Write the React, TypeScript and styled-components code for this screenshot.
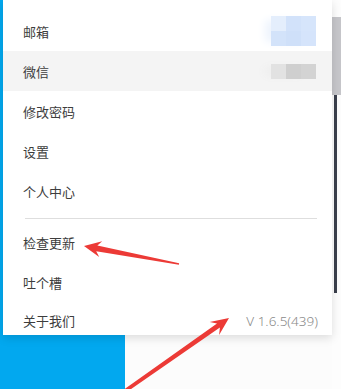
import styled, { createGlobalStyle } from "styled-components";

const GlobalStyle = createGlobalStyle`
  html, body {
    margin: 0;
    padding: 0;
    background: #fcfcfc;
  }
  * { box-sizing: border-box; }
`;

const Screen = styled.div`
  position: relative;
  width: 341px;
  height: 389px;
  overflow: hidden;
  font-family: "Noto Sans CJK SC", "Noto Sans", sans-serif;
`;

// what lies behind the dropdown
const Backdrop = styled.div`
  display: flex;
  height: 100%;
`;

const BlueSide = styled.div`
  width: 125px;
  background: #02a8ef;
`;

const MainArea = styled.div`
  flex: 1;
  background: #fcfcfc;
`;

const Rail = styled.div`
  width: 9px;
  display: flex;
  flex-direction: column;
  padding-top: 17px;
  background: #fdfdfd;
`;

const RailBlock = styled.div`
  height: 78px;
  background: #c6c6ca;
`;

const RailThumb = styled.div`
  width: 3px;
  height: 198px;
  margin-left: 2px;
  background: #3b404d;
`;

const Menu = styled.div`
  position: absolute;
  top: 0;
  left: 3px;
  width: 329px;
  height: 335px;
  background: #fff;
  padding-top: 11px;
  box-shadow: 0 3px 9px rgba(0, 0, 0, 0.13);
  display: flex;
  flex-direction: column;
`;

const Item = styled.div<{ $active?: boolean; $short?: boolean }>`
  display: flex;
  align-items: center;
  justify-content: space-between;
  height: ${(p) => (p.$short ? "33px" : "40px")};
  padding: ${(p) => (p.$short ? "4px 14px 0 20px" : "0 16px 0 20px")};
  background: ${(p) => (p.$active ? "#f4f4f4" : "transparent")};
  font-size: 13px;
  color: #3d3d3d;
`;

const Version = styled.span`
  font-family: "Noto Sans", "Liberation Sans", sans-serif;
  font-size: 13.5px;
  font-weight: 300;
  color: #8a8a8a;
`;

const Divider = styled.div`
  height: 1px;
  margin: 7px 15px 3px 22px;
  background: #dedede;
`;

const Mosaic = styled.div<{ $rows: number; $fringe: string }>`
  display: grid;
  grid-template-columns: repeat(3, 15px);
  grid-template-rows: repeat(${(p) => p.$rows}, 15px);
  box-shadow: -10px 0 8px -4px ${(p) => p.$fringe};
`;

const Cell = styled.div<{ $c: string }>`
  background: ${(p) => p.$c};
`;

const blueCells = ["#e4eefc", "#d2e2fa", "#d6e5fb", "#d3e3fa", "#cfe0f9", "#d5e4fb"];
const grayCells = ["#e2e2e2", "#cfcfcf", "#d3d3d3"];

const Arrows = styled.svg`
  position: absolute;
  inset: 0;
  pointer-events: none;
`;

export default function App() {
  return (
    <>
      <GlobalStyle />
      <Screen>
        <Backdrop>
          <BlueSide />
          <MainArea />
          <Rail>
            <RailBlock />
            <RailThumb />
          </Rail>
        </Backdrop>

        <Menu>
          <Item>
            <span>邮箱</span>
            <Mosaic $rows={2} $fringe="#eef4fd">
              {blueCells.map((c, i) => (
                <Cell key={i} $c={c} />
              ))}
            </Mosaic>
          </Item>
          <Item $active>
            <span>微信</span>
            <Mosaic $rows={1} $fringe="#ececec">
              {grayCells.map((c, i) => (
                <Cell key={i} $c={c} />
              ))}
            </Mosaic>
          </Item>
          <Item>修改密码</Item>
          <Item>设置</Item>
          <Item>个人中心</Item>
          <Divider />
          <Item>检查更新</Item>
          <Item>吐个槽</Item>
          <Item $short>
            <span>关于我们</span>
            <Version>V 1.6.5(439)</Version>
          </Item>
        </Menu>

        <Arrows width="341" height="389" viewBox="0 0 341 389">
          <polygon
            fill="#ec3a36"
            points="84,246 102.2,241.3 97.4,245.5 179.1,263.3 178.9,264.7 96.2,251.3 99.2,257"
          />
          <polygon
            fill="#ec3a36"
            points="229,318 219.1,335 219.9,327.6 121,396 119,393 217,323.6 209.7,322"
          />
        </Arrows>
      </Screen>
    </>
  );
}
